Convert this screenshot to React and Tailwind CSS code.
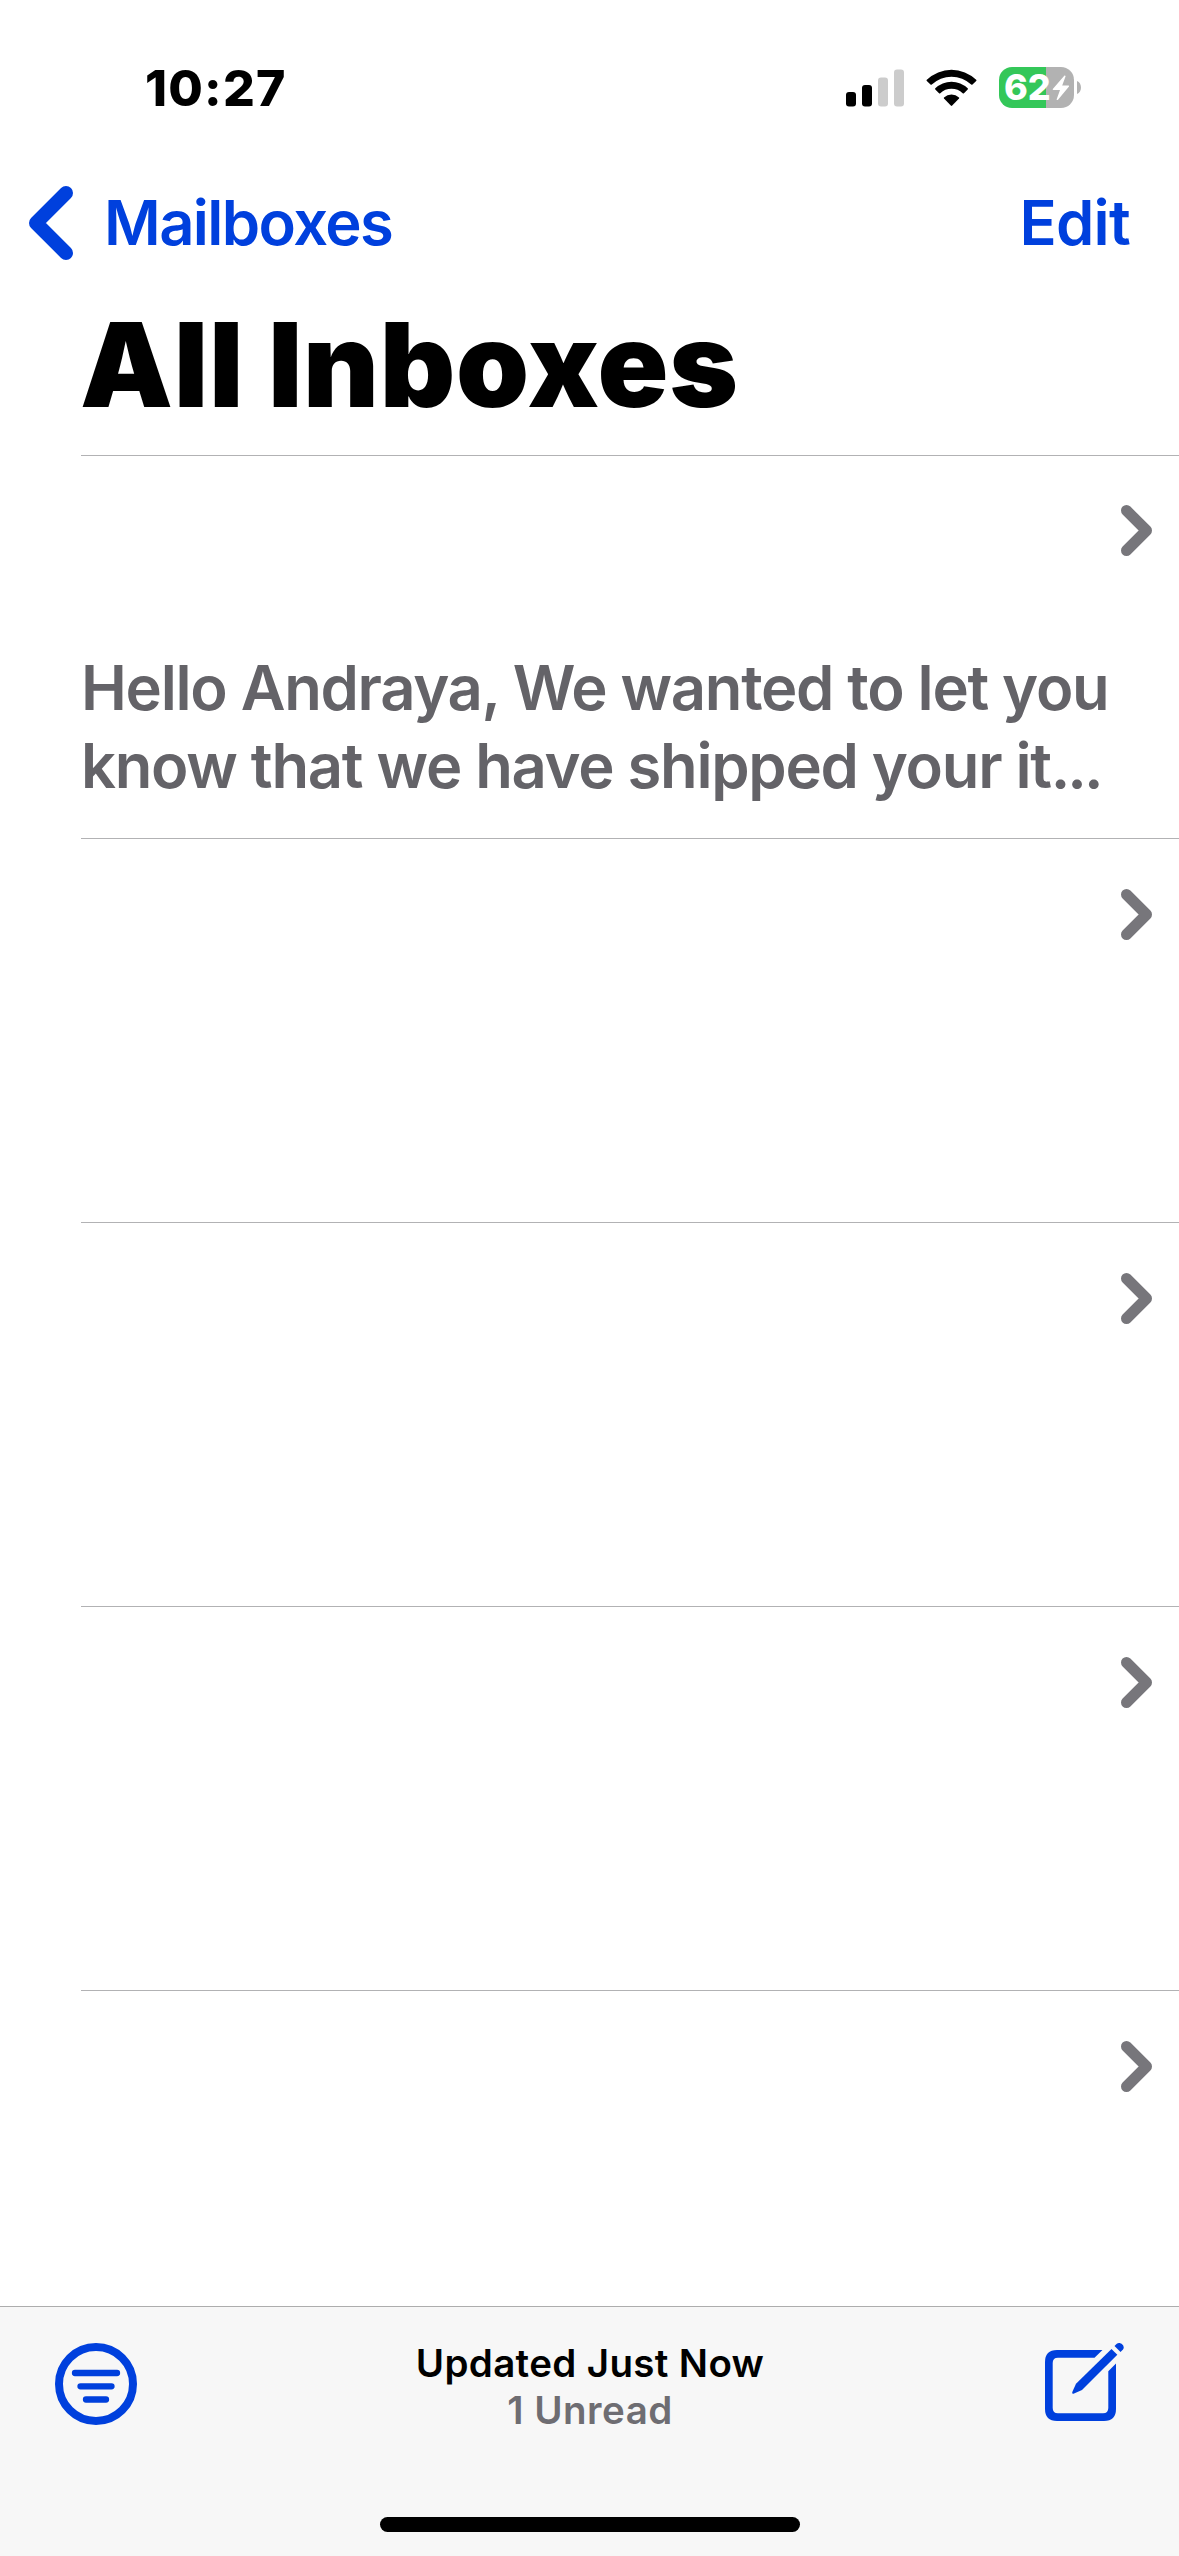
import React from 'react'

const MESSAGES = [
  { id: 1, preview: ['Hello Andraya, We wanted to let you', 'know that we have shipped your it'] },
  { id: 2, preview: [] },
  { id: 3, preview: [] },
  { id: 4, preview: [] },
  { id: 5, preview: [] },
]

function SignalIcon() {
  return (
    <svg width="58" height="38" viewBox="0 0 58 38">
      <rect x="0" y="23" width="10" height="14.5" rx="3" fill="#000" />
      <rect x="16" y="16" width="10" height="21.5" rx="3" fill="#000" />
      <rect x="32" y="8.5" width="10" height="29" rx="3" fill="#cccccc" />
      <rect x="48" y="0.5" width="10" height="37" rx="3" fill="#cccccc" />
    </svg>
  )
}

function WifiIcon() {
  return (
    <svg width="51" height="38" viewBox="0 0 51 38">
      <path d="M0.8 10.8 A35.5 35.5 0 0 1 50.2 10.8 Q50.7 11.4 50.2 12 L46.5 15.6 Q45.9 16.1 45.2 15.6 A28.5 28.5 0 0 0 5.8 15.6 Q5.1 16.1 4.5 15.6 L0.8 12 Q0.3 11.4 0.8 10.8 Z" />
      <path d="M9.3 19.3 A23.2 23.2 0 0 1 41.7 19.3 Q42.2 19.9 41.7 20.5 L38 24.2 Q37.3 24.7 36.7 24.2 A16.2 16.2 0 0 0 14.3 24.2 Q13.7 24.7 13 24.2 L9.3 20.5 Q8.8 19.9 9.3 19.3 Z" />
      <path d="M18 28.4 A11.5 11.5 0 0 1 33 28.4 Q33.5 29 33 29.6 L26.2 36.6 Q25.5 37.2 24.8 36.6 L18 29.6 Q17.5 29 18 28.4 Z" />
    </svg>
  )
}

function BatteryIcon() {
  return (
    <div className="flex items-center gap-[3px]">
      <div className="flex h-[41px] w-[75px] items-center rounded-[13px] bg-[linear-gradient(90deg,#34c759_47px,#b2b2b2_47px)] pl-[5px]">
        <span className="w-[48px] whitespace-nowrap text-[36px] font-extrabold leading-[41px] text-white">62</span>
        <svg width="18" height="26" viewBox="0 0 18 26" fill="#fff">
          <path d="M12.5 0.5 L0.8 14 Q0.4 15 1.4 15 L8 15 L4.6 24.5 Q5 25.5 6 24.8 L17 11.6 Q17.4 10.6 16.4 10.6 L10.2 10.6 L13.6 1.2 Q13.4 0.2 12.5 0.5 Z" />
        </svg>
      </div>
      <svg width="4" height="13" viewBox="0 0 4 13">
        <path d="M0 0 C5.3 2 5.3 11 0 13 Z" fill="#b2b2b2" />
      </svg>
    </div>
  )
}

function BackIcon() {
  return (
    <svg width="44" height="74" viewBox="0 0 44 74" fill="none" stroke="#0040dd" strokeWidth="14" strokeLinecap="round" strokeLinejoin="round">
      <path d="M37 7 L7 37 L37 67" />
    </svg>
  )
}

function DisclosureIcon() {
  return (
    <svg width="31" height="51" viewBox="0 0 31 51" fill="none" stroke="#77767b" strokeWidth="11" strokeLinecap="round" strokeLinejoin="round">
      <path d="M5.5 5.5 L25.5 25.5 L5.5 45.5" />
    </svg>
  )
}

function FilterIcon() {
  return (
    <svg width="82" height="82" viewBox="0 0 82 82" fill="none" stroke="#0040dd" strokeLinecap="round">
      <circle cx="41" cy="41" r="37" strokeWidth="8" />
      <path d="M20 30 H62 M25.5 43.3 H56.5 M31 56.5 H51" strokeWidth="6.3" />
    </svg>
  )
}

function ComposeIcon() {
  return (
    <svg width="80" height="80" viewBox="0 0 80 80" fill="#0040dd">
      <path d="M57.5 8 H12 Q0 8 0 20 V67 Q0 79 12 79 H59 Q71 79 71 67 V21.5 L63.3 29.3 V66 Q63.3 71.3 58 71.3 H13 Q7.7 71.3 7.7 66 V21 Q7.7 15.7 13 15.7 H49.5 Z" />
      <path d="M66.5 7 L72.3 12.8 L37 48 L28.5 51.7 Q26.5 52 27.3 50 L31 41.8 Z" />
      <path d="M69.5 4 L71.5 2 C75 -1.3 80.7 4 78 7.5 L75.5 10 Z" />
    </svg>
  )
}

function MessageRow({ message }) {
  const last = message.preview.length - 1
  return (
    <li className="group ml-[81px] h-[384px] shrink-0 border-t border-[#b2b2b4] first:h-[383px]">
      <div className="flex h-[193px] justify-end pr-[27px] pt-[50px] group-first:pt-[49px]">
        <DisclosureIcon />
      </div>
      <div className="whitespace-nowrap text-[61.5px] font-semibold leading-[78px] tracking-[-1.28px] text-[#646368]">
        {message.preview.map((line, i) => (
          <p key={line}>
            {line}
            {i === last && <span className="tracking-[-3px]">...</span>}
          </p>
        ))}
      </div>
    </li>
  )
}

export default function App() {
  return (
    <div className="flex h-[2556px] w-[1179px] flex-col overflow-hidden bg-white font-['Inter',sans-serif] text-black">
      <div className="flex h-[175px] shrink-0 items-center justify-between pl-[145px] pr-[98px]">
        <span className="text-[50px] font-extrabold leading-none tracking-[1.2px]">10:27</span>
        <div className="flex items-center gap-[22px]">
          <SignalIcon />
          <WifiIcon />
          <BatteryIcon />
        </div>
      </div>

      <nav className="flex h-[95px] shrink-0 items-center justify-between pl-[29px] pr-[49px] text-[61.5px] font-semibold leading-none text-[#0040dd]">
        <button className="flex items-center gap-[31px]">
          <BackIcon />
          <span className="tracking-[-1.6px]">Mailboxes</span>
        </button>
        <button className="tracking-[-0.7px]">Edit</button>
      </nav>

      <header className="flex h-[185px] shrink-0 items-center pl-[80px] pt-1">
        <h1 className="whitespace-nowrap text-[117px] font-black leading-none tracking-[0.7px]">All Inboxes</h1>
      </header>

      <ul className="flex h-[1851px] shrink-0 flex-col overflow-hidden">
        {MESSAGES.map(m => <MessageRow key={m.id} message={m} />)}
      </ul>

      <footer className="flex h-[250px] shrink-0 flex-col items-center justify-between border-t border-[#adadad] bg-[#f7f7f7] pb-6">
        <div className="flex w-full items-start justify-between pl-[55px] pr-[54px] pt-[33px]">
          <div className="pt-[3px]"><FilterIcon /></div>
          <div className="pr-[2px] text-center text-[38.5px] font-semibold leading-[47px]">
            <p className="tracking-[0.35px]">Updated Just Now</p>
            <p className="tracking-[0.5px] text-[#6e6d72]">1 Unread</p>
          </div>
          <div className="pt-[2px]"><ComposeIcon /></div>
        </div>
        <div className="h-[15px] w-[420px] rounded-full bg-black" />
      </footer>
    </div>
  )
}
